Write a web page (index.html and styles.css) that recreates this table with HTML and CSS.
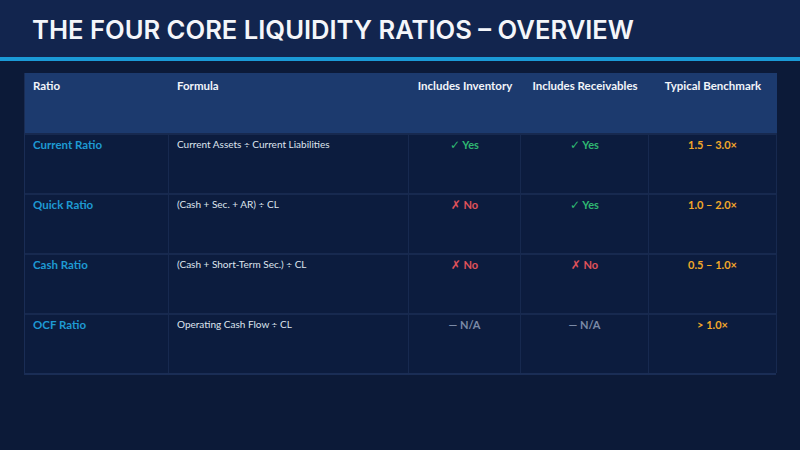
FILE: index.html
```html
<!DOCTYPE html>
<html lang="en">
<head>
<meta charset="utf-8">
<title>The Four Core Liquidity Ratios – Overview</title>
<link rel="stylesheet" href="styles.css">
</head>
<body>
<header class="topbar">
  <h1 class="title">THE FOUR CORE LIQUIDITY RATIOS – OVERVIEW</h1>
</header>
<div class="accent"></div>
<main class="content">
  <div class="table">
    <div class="th">Ratio</div>
    <div class="th">Formula</div>
    <div class="th center">Includes Inventory</div>
    <div class="th center">Includes Receivables</div>
    <div class="th center">Typical Benchmark</div>

    <div class="td name">Current Ratio</div>
    <div class="td formula">Current Assets ÷ Current Liabilities</div>
    <div class="td center yes"><span class="mark">✓</span> Yes</div>
    <div class="td center yes"><span class="mark">✓</span> Yes</div>
    <div class="td center bench">1.5 – 3.0×</div>

    <div class="td name">Quick Ratio</div>
    <div class="td formula">(Cash + Sec. + AR) ÷ CL</div>
    <div class="td center no"><span class="mark">✗</span> No</div>
    <div class="td center yes"><span class="mark">✓</span> Yes</div>
    <div class="td center bench">1.0 – 2.0×</div>

    <div class="td name">Cash Ratio</div>
    <div class="td formula">(Cash + Short-Term Sec.) ÷ CL</div>
    <div class="td center no"><span class="mark">✗</span> No</div>
    <div class="td center no"><span class="mark">✗</span> No</div>
    <div class="td center bench">0.5 – 1.0×</div>

    <div class="td name">OCF Ratio</div>
    <div class="td formula">Operating Cash Flow ÷ CL</div>
    <div class="td center na">— N/A</div>
    <div class="td center na">— N/A</div>
    <div class="td center bench">&gt; 1.0×</div>
  </div>
</main>
</body>
</html>
```

FILE: styles.css
```css
html, body {
  margin: 0;
  padding: 0;
}
body {
  width: 800px;
  height: 450px;
  background: #0c1a38;
  font-family: Lato, "Open Sans", "DejaVu Sans", sans-serif;
  overflow: hidden;
}
.topbar {
  height: 57px;
  background: #12254e;
  display: flex;
  align-items: center;
  padding-left: 32px;
  box-sizing: border-box;
}
.title {
  margin: 0;
  padding-top: 2px;
  color: #f4f6fa;
  font-family: Inter, "Open Sans", sans-serif;
  font-weight: 600;
  font-size: 25.6px;
  letter-spacing: 0;
}
.accent {
  height: 4px;
  background: #1b9ad6;
}
.content {
  padding: 12px 24px 0 24px;
}
.table {
  display: grid;
  grid-template-columns: 144px 240px 112px 128px 128px;
  grid-template-rows: 60px repeat(4, 60px);
  border-left: 1px solid #1a2d55;
  border-bottom: 2px solid #1a2d55;
  width: 752px;
  box-sizing: border-box;
}
.th {
  background: #1c3a6e;
  color: #f2f5fa;
  font-weight: 700;
  font-size: 11.5px;
  padding: 6px 8px;
}
.td {
  background: #0c1c3e;
  border-right: 1px solid #17294f;
  border-top: 2px solid #17294f;
  padding: 3px 8px;
  font-size: 11px;
}
.center { text-align: center; }
.name {
  color: #1e9ad3;
  font-weight: 700;
  font-size: 11.5px;
}
.formula {
  color: #dfe5ee;
  font-size: 10px;
}
.mark {
  font-family: "DejaVu Sans", sans-serif;
  font-size: 12px;
}
.yes { color: #2fb872; font-weight: 700; }
.no { color: #e0525a; font-weight: 700; }
.na { color: #7b8aa6; font-weight: 700; }
.bench { color: #f2a829; font-weight: 700; }
```
